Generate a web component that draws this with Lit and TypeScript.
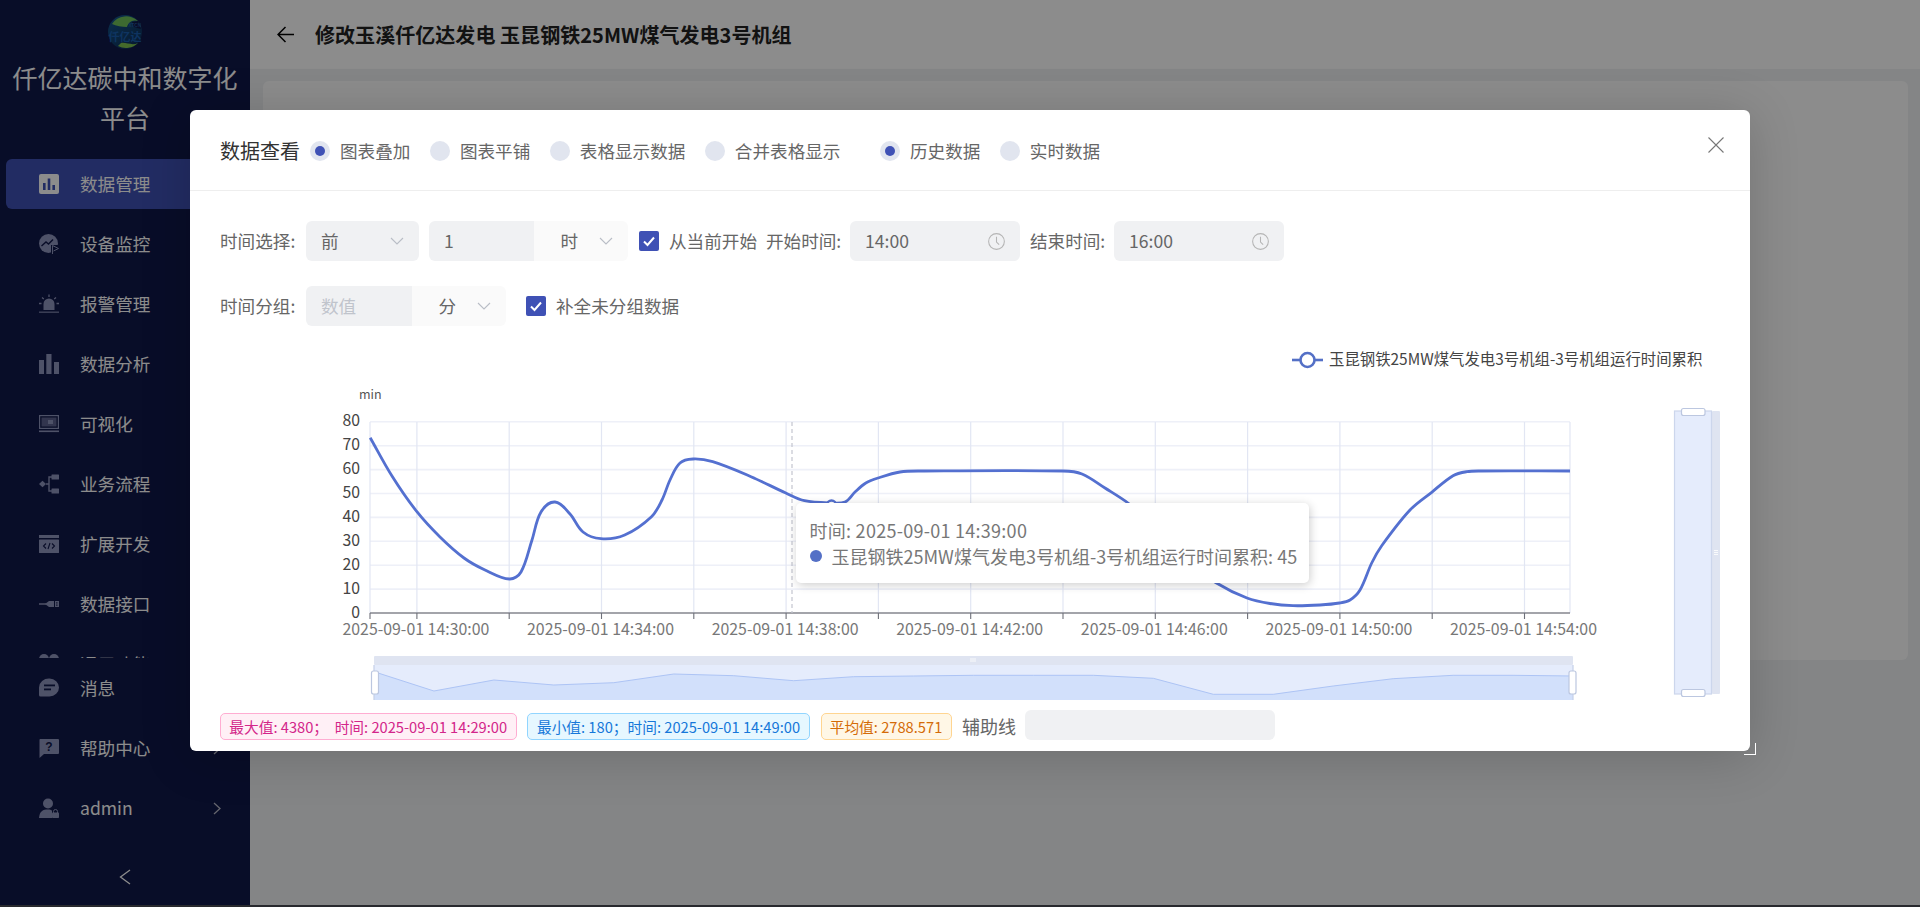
import { LitElement, html, css, svg } from "lit";
import { customElement } from "lit/decorators.js";

const FONT = `"Noto Sans CJK SC","Noto Sans",sans-serif`;

const P: [number, number][] = [
  [370.2,437.7],[392,476],[416.9,511.7],[440,537],[464,558],[485,570],[509.5,579],[521,572],[532,540],[541,512],[555,502],[570,514],[583,532],[601,538.7],[624.7,535],[651.5,516.7],[662,500],[670,480],[680,463],[693,459],[712.7,461.7],[751,476.7],[785.8,493],[804.5,500.7],[831,503],[845,502],[855,492],[865.8,483],[878,478],[900,472],[920,471],[1063,471],[1082,474],[1105,488],[1128,503],[1154,525],[1185,560],[1216,582.7],[1247,598],[1270,603.5],[1293,605.7],[1320,605],[1339.5,603],[1350,600],[1360,590],[1371.7,563],[1381.7,545.7],[1410,510],[1431.7,492.3],[1453,475.7],[1466.7,471.7],[1480,471],[1570,471],
];

function smooth(pts: [number, number][]): string {
  let d = `M${pts[0][0]} ${pts[0][1]}`;
  const tan = (i: number) => {
    const a = pts[Math.max(0, i - 1)];
    const b = pts[Math.min(pts.length - 1, i + 1)];
    const dx = b[0] - a[0];
    const dy = b[1] - a[1];
    const l = Math.hypot(dx, dy) || 1;
    return [dx / l, dy / l];
  };
  for (let i = 0; i < pts.length - 1; i++) {
    const p = pts[i];
    const q = pts[i + 1];
    const l = Math.hypot(q[0] - p[0], q[1] - p[1]) / 3;
    const t1 = tan(i);
    const t2 = tan(i + 1);
    d += ` C${(p[0] + t1[0] * l).toFixed(1)} ${(p[1] + t1[1] * l).toFixed(1)} ${(q[0] - t2[0] * l).toFixed(1)} ${(q[1] - t2[1] * l).toFixed(1)} ${q[0]} ${q[1]}`;
  }
  return d;
}

const MINI = [671.7,691,680,685,682.7,674,675.7,680.7,676.7,676,675.3,675.3,675.3,678.3,694.3,694.3,686,678.7,675.3,675.3,676];
const miniLine = MINI.map((y, i) => `${374 + i * 59.95},${y}`).join(" ");

const ic = (c: unknown) => html`<svg class="ic" viewBox="0 0 20 20">${c}</svg>`;
const ICONS = {
  manage: ic(svg`<rect width="20" height="20" rx="2" fill="#fff"/><rect x="4" y="9" width="2.6" height="7" fill="#3f51b5"/><rect x="8.7" y="4.5" width="2.6" height="11.5" fill="#3f51b5"/><rect x="13.4" y="11" width="2.6" height="5" fill="#3f51b5"/>`),
  monitor: ic(svg`<circle cx="9.5" cy="9.5" r="9.5" fill="currentColor"/><path d="M2.5 12 L7 8 L9.5 10 L14 5.5" stroke="#101849" stroke-width="1.4" fill="none"/><path d="M12 11 h8 v9 h-8z" fill="#101849"/><path d="M13.5 20 V11.5 L19.5 14.5 L14.5 17" stroke="currentColor" stroke-width="1" fill="none"/>`),
  alarm: ic(svg`<path d="M4.5 16 V10 a5.5 5.5 0 0 1 11 0 V16z" fill="currentColor"/><rect y="17.6" width="20" height="1.1" fill="currentColor"/><path d="M10 0.5 V3 M3 3.5 L4.8 5 M17 3.5 L15.2 5 M0 9.5 H2.5 M17.5 9.5 H20" stroke="currentColor" stroke-width="1.3"/>`),
  bars: ic(svg`<rect y="6" width="5" height="14" fill="currentColor"/><rect x="7.3" width="5.2" height="20" fill="currentColor"/><rect x="15" y="8" width="5" height="12" fill="currentColor"/>`),
  screen: ic(svg`<rect x=".6" y="1.6" width="18.8" height="12.8" fill="none" stroke="currentColor" stroke-width="1.2"/><rect x="2.5" y="3.5" width="15" height="9" fill="currentColor" opacity=".6"/><rect x="9" y="6" width="5" height="4" fill="currentColor"/><rect y="16.5" width="20" height="1.6" fill="currentColor"/>`),
  flow: ic(svg`<path d="M0 10 L3.5 6.8 L7 10 L3.5 13.2z" fill="currentColor"/><path d="M13 3 H10 V17 H13 M7 10 H10" stroke="currentColor" stroke-width="1.4" fill="none"/><rect x="12.5" y=".5" width="7.5" height="5" rx=".5" fill="currentColor"/><rect x="12.5" y="14.5" width="7.5" height="5" rx=".5" fill="currentColor"/>`),
  ext: ic(svg`<rect y="1" width="20" height="3" fill="currentColor"/><rect y="5.5" width="20" height="13.5" rx=".6" fill="currentColor"/><path d="M7 9.5 L4.5 12 L7 14.5 M13 9.5 L15.5 12 L13 14.5 M11 9 L9 15" stroke="#101849" stroke-width="1.1" fill="none"/>`),
  usb: ic(svg`<path d="M0 10 H7" stroke="currentColor" stroke-width="1.5"/><path d="M6 10 L10 7 H15 V13 H10z" fill="currentColor"/><rect x="16" y="7" width="4" height="6" fill="currentColor"/><rect x="17" y="8.4" width="1.6" height="1" fill="#101849"/><rect x="17" y="10.6" width="1.6" height="1" fill="#101849"/>`),
  people: ic(svg`<circle cx="5" cy="5" r="5" fill="currentColor"/><circle cx="15" cy="5" r="5" fill="currentColor"/>`),
  msg: ic(svg`<path d="M10.5 .5 a9.5 9 0 0 1 0 18 H1.5 Q0 18.500 0 17 V9.500 A10 9 0 0 1 10.500 .5z" fill="currentColor"/><rect x="5" y="6.500" width="11" height="1.800" fill="#101849"/><rect x="5" y="10.500" width="7" height="1.800" fill="#101849"/>`),
  help: ic(svg`<path d="M1 1 H19 a1 1 0 0 1 1 1 V15 a1 1 0 0 1-1 1 H5 L.5 20 V2 a1 1 0 0 1 .5-1z" fill="currentColor"/><text x="10" y="13" text-anchor="middle" font-size="12" font-weight="700" fill="#101849" font-family="Liberation Sans,sans-serif">?</text>`),
  admin: ic(svg`<circle cx="9" cy="5.500" r="5" fill="currentColor"/><path d="M0 20 C.5 13 4 11.500 9 11.500 C11 11.500 12 12 13 12.500 V20z" fill="currentColor"/><rect x="13" y="14.500" width="7" height="5.500" rx=".8" fill="currentColor"/><path d="M14.500 15 V13.500 a2 2 0 0 1 4 0 V15" stroke="currentColor" stroke-width="1" fill="none"/>`),
};

const MENU: [string, unknown][] = [
  ["设备监控", ICONS.monitor],
  ["报警管理", ICONS.alarm],
  ["数据分析", ICONS.bars],
  ["可视化", ICONS.screen],
  ["业务流程", ICONS.flow],
  ["扩展开发", ICONS.ext],
  ["数据接口", ICONS.usb],
  ["运用功能", ICONS.people],
];

const chev = html`<svg class="chev" viewBox="0 0 14 8"><path d="M1 1 L7 7 L13 1" fill="none" stroke="currentColor" stroke-width="1.100"/></svg>`;
const clock = html`<svg class="clock" viewBox="0 0 16 16"><circle cx="8" cy="8" r="7.400" fill="none" stroke="currentColor" stroke-width="1"/><path d="M8 3.500 V8.500 L10.500 11" fill="none" stroke="currentColor" stroke-width="1"/></svg>`;
const tick = html`<svg class="tick" viewBox="0 0 20 20"><path d="M5 10.500 L8.500 14 L15 6.500" fill="none" stroke="#fff" stroke-width="2"/></svg>`;

@customElement("app-root")
export class AppRoot extends LitElement {
  static styles = css`
    :host { display: block; width: 1920px; height: 907px; position: relative; overflow: hidden; font-family: "Noto Sans CJK SC","Noto Sans",sans-serif; }
    * { box-sizing: border-box; }
    .page { display: flex; width: 1920px; height: 907px; border-bottom: 2px solid #4a4c55; background: #f0f2f5; }
    .side { width: 250px; flex: none; background: #101849; color: #fff; display: flex; flex-direction: column; height: 100%; }
    .logo { width: 34px; height: 34px; margin: 15px auto 0; display: block; flex: none; }
    .brand { font-size: 25px; line-height: 40px; text-align: center; margin-top: 8px; flex: none; height: 80px; color: #fff; }
    .menu { height: 499px; margin-top: 22px; overflow: hidden; flex: none; display: flex; flex-direction: column; gap: 10px; }
    .item { height: 50px; flex: none; display: flex; align-items: center; padding-left: 39px; gap: 21px; font-size: 17.6px; color: #fff; position: relative; }
    .item span { margin-bottom: 2px; }
    .item.active { background: #3f51b5; margin: 0 6px; padding-left: 33px; border-radius: 6px; }
    .ic { width: 20px; height: 20px; flex: none; color: #8f95bd; display: block; }
    .side-foot { flex: none; display: flex; flex-direction: column; gap: 10px; margin-top: 5px; }
    .arr { position: absolute; left: 213px; top: 19px; width: 8px; height: 13px; color: #fff; opacity: .7; }
    .collapse { width: 12px; height: 16px; margin: 36px auto 0; display: block; color: #fff; flex: none; }

    .main { flex: 1; display: flex; flex-direction: column; min-width: 0; }
    .top { height: 69px; background: #fff; display: flex; align-items: center; padding-left: 27px; flex: none; }
    .back { width: 17px; height: 17px; color: #000; flex: none; }
    .top-title { font-size: 20px; font-weight: 700; color: #222; margin-left: 21px; white-space: nowrap; letter-spacing: .05px; }
    .content { flex: 1; padding: 12px 12px 0 13px; }
    .card { height: 579px; background: #fff; border-radius: 6px; }

    .mask { position: absolute; inset: 0; background: rgba(0,0,0,.45); }

    .modal { position: absolute; left: 190px; top: 110px; width: 1560px; height: 641px; background: #fff; border-radius: 6px; box-shadow: 0 6px 50px rgba(0,0,0,.18); color: #666; font-size: 17.6px; }
    .resize { position: absolute; right: -6px; bottom: -4px; width: 12px; height: 12px; border-right: 1.5px solid #fff; border-bottom: 1.5px solid #fff; }
    .head { height: 81px; border-bottom: 1px solid #eee; display: flex; align-items: center; padding: 2px 26px 0 30px; }
    .h-title { font-size: 20px; color: #333; margin: 0 10px 2px 0; white-space: nowrap; }
    .radios { display: flex; gap: 19.500px; }
    .radios.second { margin-left: 39.500px; }
    .radio { display: flex; align-items: center; gap: 10px; white-space: nowrap; }
    .radio span { margin-bottom: 2px; }
    .dot { width: 20px; height: 20px; border-radius: 50%; background: #e1e5ef; display: flex; align-items: center; justify-content: center; flex: none; }
    .dot.on::after { content: ""; width: 10px; height: 10px; border-radius: 50%; background: #3f51b5; }
    .close { margin-left: auto; align-self: flex-start; margin-top: 25px; width: 16px; height: 16px; color: #777; }

    .row { display: flex; align-items: center; height: 40px; margin-left: 30px; white-space: nowrap; }
    .r1 { margin-top: 30px; }
    .r2 { margin-top: 25px; }
    .lbl { flex: none; margin-bottom: 2px; }
    .t { margin-bottom: 2px; }
    .l4 { width: 86px; }
    .l4b { width: 84px; }
    .ctl { height: 40px; display: flex; align-items: center; flex: none; background: #f0f1f3; border-radius: 6px; padding: 0 15px 0 15px; justify-content: space-between; }
    .w113 { width: 113px; }
    .w170 { width: 170px; }
    .group { display: flex; flex: none; margin-left: 10px; }
    .group.first { margin-left: 0; }
    .g-in { width: 105px; height: 40px; background: #f0f1f3; border-radius: 6px 0 0 6px; padding-left: 15px; display: flex; align-items: center; }
    .g-in.ph { color: #c0c4cc; width: 106px; }
    .g-sel { height: 40px; width: 94px; background: #fafafa; border-radius: 0 6px 6px 0; padding: 0 15px 0 26.500px; display: flex; align-items: center; justify-content: space-between; }
    .chev { width: 14px; height: 8px; color: #b9bdc6; flex: none; }
    .clock { width: 17px; height: 17px; color: #b5b5b5; flex: none; }
    .check { display: flex; align-items: center; gap: 10px; flex: none; }
    .box { width: 20px; height: 20px; background: #3f51b5; border-radius: 2px; flex: none; }
    .tick { display: block; width: 20px; height: 20px; }
    .c1 { margin-left: 11px; margin-right: 9px; }
    .c2 { margin-left: 20px; }
    .l-e { margin-left: 10px; width: 84px; }

    .chart { position: relative; height: 370px; margin-top: 14px; }
    .chart svg { display: block; }
    .tip { position: absolute; left: 606px; top: 163px; width: 513px; height: 80px; background: #fff; border-radius: 5px; box-shadow: 1px 2px 10px rgba(0,0,0,.2); padding: 14px 0 0 13.500px; line-height: 26px; color: #777; white-space: nowrap; font-size: 18px; }
    .tip-first { letter-spacing: .27px; }
    .tip-row { display: flex; align-items: center; gap: 10px; }
    .tip-dot { width: 12px; height: 12px; border-radius: 50%; background: #5470c6; flex: none; }

    .foot { display: flex; align-items: flex-end; margin-left: 30px; height: 30px; }
    .tag { height: 27px; border: 1px solid; border-radius: 5px; font-size: 14.700px; display: flex; align-items: center; justify-content: center; white-space: pre; flex: none; margin-right: 10.500px; }
    .t1 { width: 296.500px; background: #fff0f6; border-color: #ffadd2; color: #d3268a; }
    .t2 { width: 283px; background: #e6f7ff; border-color: #91d5ff; color: #1677d9; }
    .t3 { width: 131px; background: #fff7e6; border-color: #ffd591; color: #d46b08; }
    .aux { width: 62.500px; flex: none; line-height: 27px; font-size: 18px; }
    .aux-in { width: 250px; height: 30px; background: #f0f1f3; border-radius: 6px; flex: none; }
  `;

  private renderChart() {
    const ys = [0,1,2,3,4,5,6,7,8];
    const vx: number[] = [];
    for (let i = 0; i <= 12; i++) vx.push(416.9 + i * 92.3);
    const yOf = (i: number) => 613 - i * 23.9;
    const labels = [0,2,4,6,8,10,12];
    return html`<svg width="1560" height="370" viewBox="190 340 1560 370" font-family=${FONT}>
      <path d="M1292 360 H1323" stroke="#5470c6" stroke-width="2.600"/>
      <circle cx="1307.500" cy="360" r="7" fill="#fff" stroke="#5470c6" stroke-width="2.600"/>
      <text x="1329" y="365" font-size="15.400" fill="#444">玉昆钢铁25MW煤气发电3号机组-3号机组运行时间累积</text>
      <text x="359" y="399" font-size="12.500" fill="#555">min</text>

      ${ys.slice(1).map((i) => svg`<path d="M370 ${yOf(i)} H1570" stroke="#eef0f8" stroke-width="1.600"/>`)}
      ${[370, ...vx, 1570].map((x) => svg`<path d="M${x} 422 V613" stroke="#e2e6f3" stroke-width="1.200"/>`)}
      ${ys.map((i) => svg`<text x="360" y=${yOf(i) + 4.5} text-anchor="end" font-size="15.800" fill="#444">${i * 10}</text>`)}
      <path d="M370 613 H1570" stroke="#84868e" stroke-width="1.600"/>
      ${[370, ...vx].map((x) => svg`<path d="M${x} 613 V619" stroke="#6e7079" stroke-width="1.100"/>`)}
      ${labels.map((i) => svg`<text x=${vx[i] - 1} y="634.500" text-anchor="middle" font-size="15.900" fill="#777">2025-09-01 14:${30 + i * 2}:00</text>`)}
      <path d="M792 422 V613" stroke="#c3c5cf" stroke-width="1.200" stroke-dasharray="4 3"/>

      <path d=${smooth(P)} fill="none" stroke="#5470d0" stroke-width="2.800"/>
      <circle cx="831.500" cy="505" r="4.500" fill="#fff" stroke="#5470d0" stroke-width="2.500"/>

      <rect x="374" y="656" width="1199" height="9" rx="1" fill="#dfe4f1"/>
      <rect x="374" y="665" width="1199" height="35" fill="#e5ecfc"/>
      <polygon points="374,700 ${miniLine} 1573,700" fill="#d2e0fb"/>
      <polyline points=${miniLine} fill="none" stroke="#adc4f5" stroke-width="1"/>
      <path d="M374 665 V700 M1573 665 V700" stroke="#c5d0e8" stroke-width="1.200"/>
      <rect x="371.500" y="671" width="7" height="23" rx="2" fill="#fff" stroke="#bcc7e0" stroke-width="1.200"/>
      <rect x="1569" y="671" width="7" height="23" rx="2" fill="#fff" stroke="#bcc7e0" stroke-width="1.200"/>
      <path d="M971 658 V662 M973 658 V662 M975 658 V662" stroke="#fff" stroke-width=".8"/>

      <rect x="1712" y="411" width="8" height="283" rx="1" fill="#dfe4f1"/>
      <rect x="1674.500" y="411" width="37" height="283" fill="#e5ecfc" stroke="#ccd6ec" stroke-width="1.200"/>
      <rect x="1681.500" y="408.500" width="23.500" height="7" rx="2" fill="#fff" stroke="#bcc7e0" stroke-width="1.200"/>
      <rect x="1681.500" y="689.500" width="23.500" height="7" rx="2" fill="#fff" stroke="#bcc7e0" stroke-width="1.200"/>
      <path d="M1714 550.500 H1718 M1714 552.500 H1718 M1714 554.500 H1718" stroke="#fff" stroke-width=".8"/>
    </svg>`;
  }

  render() {
    const right = html`<svg class="arr" viewBox="0 0 8 13"><path d="M1 1 L7 6.500 L1 12" fill="none" stroke="currentColor" stroke-width="1.300"/></svg>`;
    return html`
      <div class="page">
        <aside class="side">
          <svg class="logo" viewBox="0 0 34 34" font-family=${FONT}>
            <defs>
              <linearGradient id="g" x1="0" y1="0" x2=".7" y2="1">
                <stop offset="0" stop-color="#155a92"/><stop offset="1" stop-color="#0e2f58"/>
              </linearGradient>
            </defs>
            <circle cx="17" cy="17" r="17" fill="url(#g)"/>
            <path d="M4 9 A17 17 0 0 1 30 6 C24 4 20 8 19 12 C14 12 8 11 4 9z" fill="#6fc25a"/>
            <path d="M10 31 A17 17 0 0 0 30 28 C24 31 18 27 13 28z" fill="#7fc24f"/>
            <path d="M24 7 L30 6 L33 14 L26 12z" fill="#101849"/>
            <text x="33" y="11.500" text-anchor="end" font-size="5" fill="#2a6bb5">XTCN</text>
            <text x="17" y="25.500" text-anchor="middle" font-size="11" fill="#1a5fb0" font-weight="700">仟亿达</text>
          </svg>
          <div class="brand">仟亿达碳中和数字化<br />平台</div>
          <div class="menu">
            <div class="item active">${ICONS.manage}<span>数据管理</span></div>
            ${MENU.map(([t, i]) => html`<div class="item">${i}<span>${t}</span></div>`)}
          </div>
          <div class="side-foot">
            <div class="item">${ICONS.msg}<span>消息</span></div>
            <div class="item">${ICONS.help}<span>帮助中心</span>${right}</div>
            <div class="item">${ICONS.admin}<span>admin</span>${right}</div>
          </div>
          <svg class="collapse" viewBox="0 0 12 16"><path d="M11 1 L1.500 8 L11 15" fill="none" stroke="currentColor" stroke-width="1.300"/></svg>
        </aside>
        <main class="main">
          <div class="top">
            <svg class="back" viewBox="0 0 16 16"><path d="M16 8 H1 M8 1 L1 8 L8 15" fill="none" stroke="currentColor" stroke-width="1.400"/></svg>
            <span class="top-title">修改玉溪仟亿达发电 玉昆钢铁25MW煤气发电3号机组</span>
          </div>
          <div class="content"><div class="card"></div></div>
        </main>
      </div>
      <div class="mask"></div>
      <section class="modal">
        <header class="head">
          <span class="h-title">数据查看</span>
          <div class="radios">
            <label class="radio"><i class="dot on"></i><span>图表叠加</span></label>
            <label class="radio"><i class="dot"></i><span>图表平铺</span></label>
            <label class="radio"><i class="dot"></i><span>表格显示数据</span></label>
            <label class="radio"><i class="dot"></i><span>合并表格显示</span></label>
          </div>
          <div class="radios second">
            <label class="radio"><i class="dot on"></i><span>历史数据</span></label>
            <label class="radio"><i class="dot"></i><span>实时数据</span></label>
          </div>
          <svg class="close" viewBox="0 0 16 16"><path d="M.5 .5 L15.500 15.500 M15.500 .5 L.5 15.500" stroke="currentColor" stroke-width="1.100"/></svg>
        </header>
        <div class="row r1">
          <span class="lbl l4">时间选择:</span>
          <div class="ctl w113"><span class="t">前</span>${chev}</div>
          <div class="group"><div class="g-in"><span class="t">1</span></div><div class="g-sel"><span class="t">时</span>${chev}</div></div>
          <div class="check c1"><span class="box">${tick}</span><span class="t">从当前开始</span></div>
          <span class="lbl l4b">开始时间:</span>
          <div class="ctl w170"><span class="t">14:00</span>${clock}</div>
          <span class="lbl l-e">结束时间:</span>
          <div class="ctl w170"><span class="t">16:00</span>${clock}</div>
        </div>
        <div class="row r2">
          <span class="lbl l4">时间分组:</span>
          <div class="group first"><div class="g-in ph"><span class="t">数值</span></div><div class="g-sel"><span class="t">分</span>${chev}</div></div>
          <div class="check c2"><span class="box">${tick}</span><span class="t">补全未分组数据</span></div>
        </div>
        <div class="chart">
          ${this.renderChart()}
          <div class="tip">
            <div class="tip-first">时间: 2025-09-01 14:39:00</div>
            <div class="tip-row"><i class="tip-dot"></i><span>玉昆钢铁25MW煤气发电3号机组-3号机组运行时间累积: 45</span></div>
          </div>
        </div>
        <div class="foot">
          <span class="tag t1">最大值: 4380；  时间: 2025-09-01 14:29:00</span>
          <span class="tag t2">最小值: 180；时间: 2025-09-01 14:49:00</span>
          <span class="tag t3">平均值: 2788.571</span>
          <span class="aux">辅助线</span>
          <div class="aux-in"></div>
        </div>
        <div class="resize"></div>
      </section>
    `;
  }
}
